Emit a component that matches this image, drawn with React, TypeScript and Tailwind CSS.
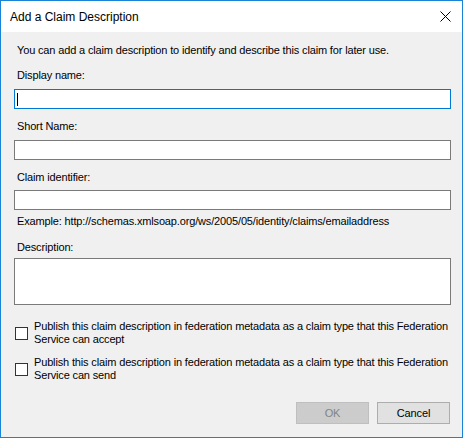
import { useState } from 'react';

function TextBox({ focused, className = '' }: { focused?: boolean; className?: string }) {
  return (
    <div
      className={
        'w-[437px] h-[20px] bg-white border flex items-center ' +
        (focused ? 'border-[#0078d7] ' : 'border-[#7a7a7a] ') +
        className
      }
    >
      {focused && <span className="ml-[2px] w-px h-[13px] bg-black" />}
    </div>
  );
}

function Check({ label }: { label: string }) {
  const [checked, setChecked] = useState(false);
  return (
    <div className="flex items-start gap-[6px] ml-[1px]">
      <button
        onClick={() => setChecked(!checked)}
        className="mt-[7px] w-[13px] h-[13px] bg-white border border-[#333333] shrink-0"
      />
      <p className="w-[416px] leading-[13px]">{label}</p>
    </div>
  );
}

export default function App() {
  return (
    <div className="w-[466px] h-[440px] bg-white" style={{ fontFamily: '"Liberation Sans", Arial, sans-serif' }}>
      <div className="w-[463px] h-[438px] border border-[#1883d7] bg-[#f0f0f0] flex flex-col text-[11px] tracking-[-0.15px] text-black">
        {/* Title bar */}
        <div className="h-[31px] bg-white flex items-center justify-between pl-[9px] pr-[11px]">
          <span className="text-[12px] tracking-normal text-black">Add a Claim Description</span>
          <svg width="11" height="11" viewBox="0 0 11 11" className="text-black">
            <path d="M0.5 0.5 L10.5 10.5 M10.5 0.5 L0.5 10.5" stroke="currentColor" strokeWidth="1" />
          </svg>
        </div>

        {/* Form */}
        <div className="flex flex-col pl-[13px] pt-[12px]">
          <p className="ml-[3px] leading-[13px]">
            You can add a claim description to identify and describe this claim for later use.
          </p>

          <p className="ml-[3px] mt-[12px] leading-[13px]">Display name:</p>
          <TextBox focused className="mt-[7px]" />

          <p className="ml-[3px] mt-[11px] leading-[13px]">Short Name:</p>
          <TextBox className="mt-[7px]" />

          <p className="ml-[3px] mt-[11px] leading-[13px]">Claim identifier:</p>
          <TextBox className="mt-[6px]" />
          <p className="ml-[3px] mt-[5px] leading-[13px]">
            Example: http://schemas.xmlsoap.org/ws/2005/05/identity/claims/emailaddress
          </p>

          <p className="ml-[3px] mt-[13px] leading-[13px]">Description:</p>
          <div className="mt-[4px] w-[437px] h-[47px] bg-white border border-[#7a7a7a]" />

          <div className="mt-[15px] flex flex-col gap-[10px]">
            <Check label="Publish this claim description in federation metadata as a claim type that this Federation Service can accept" />
            <Check label="Publish this claim description in federation metadata as a claim type that this Federation Service can send" />
          </div>

          <div className="mt-[20px] flex justify-end gap-[8px] pr-[12px]">
            <button disabled className="w-[73px] h-[22px] bg-[#cccccc] border border-[#bfbfbf] text-[#838383]">
              OK
            </button>
            <button className="w-[73px] h-[22px] bg-[#e1e1e1] border border-[#adadad] text-black">
              Cancel
            </button>
          </div>
        </div>
      </div>
    </div>
  );
}
